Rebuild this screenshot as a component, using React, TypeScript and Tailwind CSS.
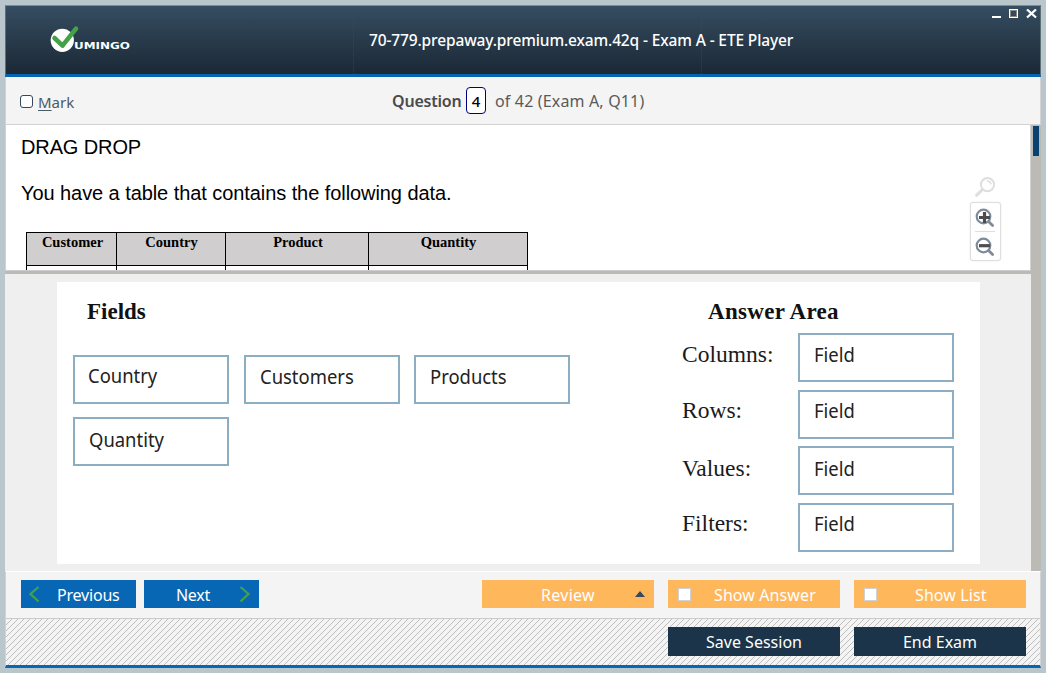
import React from "react";

const ui = "font-['Noto_Sans','Open_Sans',sans-serif]";
const serif = "font-['Liberation_Serif',serif]";

function Logo() {
  return (
    <svg width="84" height="28" viewBox="50 25 84 28" className="block">
      <circle cx="62.3" cy="40.3" r="11.6" fill="#fff" />
      <path d="M54.500 38 L62.500 45.600 L76 28.600" fill="none" stroke="#43a247" strokeWidth="4.6" strokeLinecap="round" strokeLinejoin="round" />
      <text x="74" y="49" fill="#fff" fontFamily="DejaVu Sans" fontWeight="700" fontSize="9.2" textLength="56" lengthAdjust="spacingAndGlyphs">UMINGO</text>
    </svg>
  );
}

function Header() {
  return (
    <header className="flex h-[72px] shrink-0 border-x border-t border-b-[3px] border-x-[#5d7078] border-t-[#7d8e93] border-b-[#0463b4] bg-linear-to-b from-[#364e62] to-[#1a2734] bg-origin-border">
      <div className="w-[348px] border-r border-dotted border-[#31469c]/60 pt-[19px] pl-[44px]">
        <Logo />
      </div>
      <div className={`${ui} w-[348px] border-r border-dotted border-[#31469c]/60 pt-[22px] pl-[15px] text-[15.5px] leading-[24px] font-medium tracking-[-0.13px] whitespace-nowrap text-white`}>
        <span>70-779.prepaway.premium.exam.42q - Exam A - ETE Player</span>
      </div>
      <div className="flex flex-1 justify-end pt-[3px] pr-[3px]">
        <svg width="46" height="10" viewBox="0 0 46 10" shapeRendering="crispEdges">
          <path d="M1 8h9" stroke="#fff" strokeWidth="2" />
          <path d="M18.500 .5h8v8h-8z" fill="none" stroke="#fff" />
          <path d="M19.500 1.500h6v6h-6z" fill="none" stroke="#8d887f" />
          <path d="M36 0.500l9 8M45 .5l-9 8" stroke="#fff" strokeWidth="2.300" shapeRendering="auto" />
        </svg>
      </div>
    </header>
  );
}

function QuestionBar() {
  return (
    <div className={`${ui} flex h-[48px] shrink-0 border border-t-0 border-[#d2d2d2] bg-[#f4f4f4] text-[16px] leading-[24px] text-[#5a5a5a]`}>
      <div className="flex w-[386px] pt-[13px] pl-[14px] text-[15px] text-[#4c5a66]">
        <span className="mt-[5px] mr-[5px] h-[13px] w-[13px] rounded-[3px] border border-[#34495e] bg-white" />
        <span><span className="underline underline-offset-2">M</span>ark</span>
      </div>
      <div className="flex whitespace-nowrap pt-[8px]">
        <span className="mt-[4px] w-[74px] font-semibold tracking-[-0.2px] text-[#4a4a4a]">Question</span>
        <span className="mt-[2px] h-[27px] w-[20px] rounded-[4px] border border-[#000080] bg-white text-center text-[15px] leading-[26px] font-medium text-black">4</span>
        <span className="mt-[4px] ml-[9px] tracking-[0.16px]">of 42 (Exam A, Q11)</span>
      </div>
    </div>
  );
}

function Magnifier({ plus }: { plus?: boolean }) {
  return (
    <svg width="20" height="20" viewBox="0 0 20 20">
      <path d="M13 13l4.600 4.600" stroke="#7f8b99" strokeWidth="2.800" strokeLinecap="round" />
      <circle cx="8.500" cy="8.500" r="6.800" fill="#fff" stroke="#7f8b99" strokeWidth="2.200" />
      <path d={plus ? "M4 9.500h11M9.500 4v11" : "M4 8.700h11"} stroke="#4d4d50" strokeWidth="3.200" />
    </svg>
  );
}

function QuestionPane() {
  const columns = [
    ["Customer", "w-[90px] pl-[2px]"],
    ["Country", "w-[109px] pl-[1px]"],
    ["Product", "w-[143px] pl-[2px]"],
    ["Quantity", "w-[158px] pl-[1px]"],
  ];
  return (
    <section className="flex h-[145px] shrink-0 overflow-hidden border-r border-l border-[#d2d2d2] bg-white">
      <div className="w-[949px] pt-[10px] pl-[15px] font-['Liberation_Sans',sans-serif] text-[20px] leading-[24px] text-black">
        <p className="tracking-[-0.12px]">DRAG DROP</p>
        <p className="mt-[22px] tracking-[-0.07px]">You have a table that contains the following data.</p>
        <div className="mt-[27px] ml-[5px] w-[502px] border border-black">
          <div className={`${serif} flex h-[33px] border-b border-black bg-[#d0cece] text-center text-[14.5px] leading-[19px] font-bold`}>
            {columns.map(([name, width], i) => (
              <div key={name} className={`${width} shrink-0 ${i < 3 ? "border-r border-black" : ""}`}>{name}</div>
            ))}
          </div>
          <div className="flex h-[20px]">
            {columns.map(([name, width], i) => (
              <div key={name} className={`${width} shrink-0 ${i < 3 ? "border-r border-black" : ""}`} />
            ))}
          </div>
        </div>
      </div>
      <div className="flex w-[60px] flex-col items-center pt-[51px]">
        <svg width="22" height="22" viewBox="0 0 22 22">
          <path d="M8.500 13.500l-6 5.800" stroke="#dedede" strokeWidth="3" strokeLinecap="round" />
          <circle cx="13.500" cy="8.600" r="6.600" fill="#fff" stroke="#dedede" strokeWidth="2" />
          <path d="M13 5q3.500 0 4 3.300" fill="none" stroke="#dedede" strokeWidth="1.500" />
        </svg>
        <div className="mt-[4px] flex h-[59px] w-[31px] flex-col items-center rounded-[3px] border border-[#dedede] bg-white shadow-[0_0_2px_#e6e6e6]">
          <div className="flex h-[29px] w-[20px] items-center border-b border-[#dedede] pt-[2px]"><Magnifier plus /></div>
          <div className="flex h-[28px] items-center pt-[2px]"><Magnifier /></div>
        </div>
      </div>
    </section>
  );
}

const box = "h-[49px] w-[156px] border-2 border-[#8cadc2] bg-white font-['Noto_Sans',sans-serif] text-[19px] leading-[26px] text-[#222]";
const fieldText = "inline-block origin-left scale-x-[0.97]";

const rows = [
  { label: "Columns:", labelPad: "pt-[7px]", fieldPad: "pt-[7px]" },
  { label: "Rows:", labelPad: "pt-[6px]", fieldPad: "pt-[6px]" },
  { label: "Values:", labelPad: "pt-[8px]", fieldPad: "pt-[8px]" },
  { label: "Filters:", labelPad: "pt-[6px]", fieldPad: "pt-[6px]" },
];

function Exhibit() {
  return (
    <section className="h-[297px] shrink-0 bg-[#efefef] pt-[8px] pl-[52px]">
      <div className="flex h-[282px] w-[923px] bg-white">
        <div className="w-[625px] pt-[17px] pl-[16px]">
          <h2 className={`${serif} pl-[14px] text-[23px] leading-[26px] font-bold text-[#111]`}>Fields</h2>
          <div className="mt-[30px] grid w-[500px] grid-cols-[156px_156px_156px] gap-x-[14.5px] gap-y-[13px]">
            <div className={`${box} pt-[6px] pl-[13px]`}><span className={fieldText}>Country</span></div>
            <div className={`${box} pt-[7px] pl-[14px]`}><span className={fieldText}>Customers</span></div>
            <div className={`${box} pt-[7px] pl-[14px]`}><span className={fieldText}>Products</span></div>
            <div className={`${box} pt-[8px] pl-[14px]`}><span className={fieldText}>Quantity</span></div>
          </div>
        </div>
        <div className="pt-[17px]">
          <h2 className={`${serif} pl-[26px] text-[23px] leading-[26px] font-bold tracking-[0.3px] text-[#111]`}>Answer Area</h2>
          <div className="mt-[8px] flex flex-col gap-[7.7px]">
            {rows.map((r) => (
              <div key={r.label} className="flex h-[49px]">
                <div className={`${serif} ${r.labelPad} w-[116px] text-[23.5px] leading-[28px] text-[#1a1a1a]`}>{r.label}</div>
                <div className={`${box} ${r.fieldPad} pl-[14px]`}><span className={fieldText}>Field</span></div>
              </div>
            ))}
          </div>
        </div>
      </div>
    </section>
  );
}

function Footer() {
  const orange = "h-[28px] w-[172px] bg-[#ffb75c] text-white";
  return (
    <footer className={`${ui} shrink-0 text-[16px] leading-[28px]`}>
      <div className="flex h-[48px] border-x border-t border-b border-x-[#d2d2d2] border-t-white border-b-[#cbcbcb] bg-[#f4f4f4] pt-[8px] pl-[15px] whitespace-nowrap">
        <button className="flex h-[28px] w-[115px] items-center bg-[#0867b5] pl-[7px] text-white">
          <svg width="12" height="18" viewBox="0 0 12 18"><path d="M10.500 2L2.500 9l8 7.500" fill="none" stroke="#43a247" strokeWidth="2.300" /></svg>
          <span className="mt-[2px] ml-[17px] tracking-[-0.2px]">Previous</span>
        </button>
        <button className="ml-[8px] flex h-[28px] w-[115px] items-center justify-between bg-[#0867b5] pr-[8px] pl-[32px] text-white">
          <span className="mt-[2px] tracking-[-0.3px]">Next</span>
          <svg width="12" height="18" viewBox="0 0 12 18"><path d="M1.500 2l8 7-8 7.500" fill="none" stroke="#43a247" strokeWidth="2.300" /></svg>
        </button>
        <button className={`${orange} ml-[223px] flex items-center justify-end pr-[9px]`}>
          <span className="mt-[2px] mr-[40px] tracking-[0.3px]">Review</span>
          <svg width="10" height="6" viewBox="0 0 10 6"><path d="M0 6L5 0l5 6z" fill="#34495e" /></svg>
        </button>
        <button className={`${orange} ml-[14px] flex items-center pl-[10px]`}>
          <span className="h-[13px] w-[13px] border border-[#d2d2d2] bg-white" />
          <span className="mt-[2px] ml-[23px] tracking-[0.1px]">Show Answer</span>
        </button>
        <button className={`${orange} ml-[14px] flex items-center pl-[10px]`}>
          <span className="h-[13px] w-[13px] border border-[#d2d2d2] bg-white" />
          <span className="mt-[2px] ml-[38px] tracking-[0.1px]">Show List</span>
        </button>
      </div>
      <div className="flex h-[49px] justify-end gap-[14px] border-x border-b-[3px] border-x-[#d2d2d2] border-b-[#0867b5] bg-[#f4f4f4] bg-[repeating-linear-gradient(135deg,#bdbdbd_0px,#bdbdbd_0.7071px,#f4f4f4_0.7071px,#f4f4f4_4.2426px)] pt-[8px] pr-[14px] text-white">
        <button className="h-[29px] w-[172px] bg-[#1b344a] pt-[1px] leading-[29px]">Save Session</button>
        <button className="h-[29px] w-[172px] bg-[#1b344a] pt-[1px] leading-[29px]">End Exam</button>
      </div>
    </footer>
  );
}

export default function App() {
  return (
    <div className="h-[673px] w-[1046px] overflow-hidden bg-[#b9c6cc] p-[5px]">
      <main className="flex h-[663px] w-[1036px] flex-col">
        <Header />
        <QuestionBar />
        <div className="flex h-[446px] shrink-0">
          <div className="w-[1026px]">
            <QuestionPane />
            <div className="h-[4px] border-t border-[#cecdc9] bg-[#bbbab5]" />
            <Exhibit />
          </div>
          <div className="w-[10px] bg-[#bbbab5] pt-[1px] pl-[2px]">
            <div className="h-[30px] w-[6px] bg-[#0b4170]" />
          </div>
        </div>
        <Footer />
      </main>
    </div>
  );
}
